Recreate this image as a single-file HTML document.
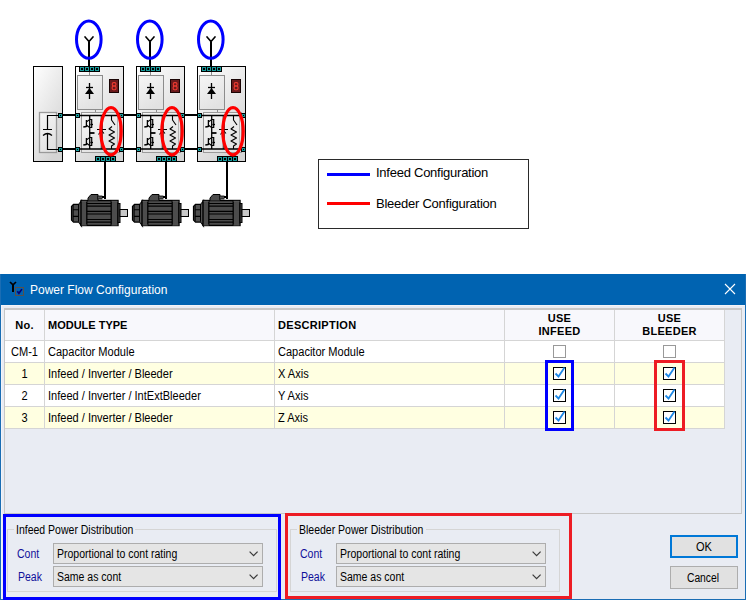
<!DOCTYPE html>
<html><head><meta charset="utf-8">
<style>
*{box-sizing:border-box}
html,body{margin:0;padding:0}
body{width:746px;height:600px;position:relative;overflow:hidden;background:#fff;font-family:"Liberation Sans",sans-serif;color:#000}
.a{position:absolute;white-space:nowrap}
#dlg{position:absolute;left:0;top:274px;width:746px;height:326px;background:#e9ecf3;border:1px solid #1a6db4;border-top:0;box-shadow:inset 0 31px 0 #1b6fb6}
#title{position:absolute;left:1px;top:274px;width:744px;height:31px;background:#0063b1}

.c12{font-size:12px;line-height:14px;transform-origin:0 0}
.cell{font-size:12px;line-height:14px;transform:scaleX(.92);transform-origin:0 0}
.cellc{font-size:12px;line-height:14px;transform:scaleX(.92);transform-origin:50% 0;text-align:center}
.ui{font-size:12px;line-height:14px;transform:scaleX(.875);transform-origin:0 0}
.hd{font-size:11px;line-height:13px;font-weight:bold;letter-spacing:.3px}
.lbl{color:#10109a}
.combo{position:absolute;width:210px;height:21px;background:#e5e5e5;border:1px solid #adadad}
.combo .ui{position:absolute;left:3px;top:3px}
.chev{position:absolute;left:195px;top:7px}
.cb{position:absolute;width:13px;height:13px;border:1px solid #000;background:#fff}
.cb.off{border-color:#999}
.btn{position:absolute;width:68px;height:23px;background:#e1e1e1;border:1px solid #adadad}
</style></head><body>

<svg class="a" style="left:0;top:0" width="746" height="274" viewBox="0 0 746 274">
<defs>
<linearGradient id="mg" x1="0" y1="0" x2="0.6" y2="1">
<stop offset="0" stop-color="#ffffff"/><stop offset="1" stop-color="#d4d4d4"/>
</linearGradient>
<linearGradient id="ig" x1="0" y1="0" x2="0.5" y2="1">
<stop offset="0" stop-color="#f6f6f6"/><stop offset="1" stop-color="#e2e2e2"/>
</linearGradient>
<g id="conn"><rect x="0" y="0" width="5" height="5" fill="#000"/><rect x="1" y="1" width="3" height="3" fill="#179a9a"/><rect x="2" y="2" width="1" height="1" fill="#000"/></g>
<g id="strip"><rect x="0" y="0" width="21" height="6" fill="#000"/>
<g fill="#179a9a"><rect x="1" y="1" width="4" height="4"/><rect x="6" y="1" width="4" height="4"/><rect x="11" y="1" width="4" height="4"/><rect x="16" y="1" width="4" height="4"/></g>
<g fill="#000"><rect x="2" y="2" width="2" height="2"/><rect x="7" y="2" width="2" height="2"/><rect x="12" y="2" width="2" height="2"/><rect x="17" y="2" width="2" height="2"/></g>
</g>
<g id="igbt" stroke="#000" fill="none">
<path d="M5.3 12l3.1-0.5" stroke-width="1.7"/>
<path d="M8.4 5v7" stroke-width="1.3"/>
<path d="M8.6 6.8l3-2.2M8.6 10.2l3 2.3" stroke-width="1.1"/>
<path d="M11.7 4.5h2v8h-2" stroke-width="1.2"/>
<path d="M12.4 9.5h2.6" stroke-width="1.3"/>
</g>
<g id="mod">
<rect x="0.5" y="66.5" width="48" height="95" fill="url(#mg)" stroke="#000" stroke-width="1"/>
<rect x="2.5" y="75.5" width="25" height="34" fill="url(#ig)" stroke="#8c8c8c" stroke-width="1"/>
<path d="M14.5 72v3.5M20.5 110v2.5" stroke="#8c8c8c" stroke-width="1"/>
<path d="M14.5 83v16" stroke="#000" stroke-width="1.3"/>
<path d="M11 87.5h7" stroke="#000" stroke-width="1.3"/>
<polygon points="10,94 19,94 14.5,88" fill="#000"/>
<rect x="34.5" y="79.5" width="9" height="13" fill="#6a1a1c" stroke="#1a0404" stroke-width="1"/>
<rect x="37.3" y="82.6" width="3.6" height="3.4" rx="1.2" fill="none" stroke="#ee3a30" stroke-width="1.1"/><rect x="37.2" y="86" width="3.8" height="3.7" rx="1.2" fill="none" stroke="#ee3a30" stroke-width="1.1"/>
<rect x="6.5" y="112.5" width="38" height="40" fill="url(#ig)" stroke="#9a9a9a" stroke-width="1"/>
<path d="M25.5 116v33M42.5 116v33" stroke="#b4b4b4" stroke-width="1"/>
<use href="#strip" x="4" y="66"/>
<use href="#strip" x="20" y="156"/>
<path d="M0 115.5h48M0 149h48" stroke="#000" stroke-width="1.4"/>
<path d="M14.7 115v34M27 115v34" stroke="#000" stroke-width="1.3"/>
<use href="#igbt" x="3" y="115"/>
<use href="#igbt" x="3" y="133"/>
<path d="M14.7 133h4.8" stroke="#000" stroke-width="1.8"/>
<path d="M22 129.5h9M23.5 134.5l3-4M26.5 130.5l2.5 3" stroke="#000" stroke-width="1.1" fill="none"/>
<path d="M36.5 115v5l3.5 5M37 126.5l-3 2.5 5.5 3-5.5 3 5.5 3-5.5 3 5.5 3-3 2v3" stroke="#000" stroke-width="1.1" fill="none" stroke-linejoin="round"/>
<use href="#conn" x="0" y="113"/><use href="#conn" x="44" y="113"/>
<use href="#conn" x="0" y="147"/><use href="#conn" x="44" y="147"/>
<path d="M14 41.5v25" stroke="#000" stroke-width="2"/>
<path d="M10 36.3v0.7l4 4.6 4-4.6v-0.7" fill="none" stroke="#000" stroke-width="1.6"/>
<path d="M30 161v38" stroke="#000" stroke-width="2"/>
<path d="M26.5 197h4.5" stroke="#000" stroke-width="2"/>
<ellipse cx="13.8" cy="39.6" rx="12.3" ry="18.7" fill="none" stroke="#0000ff" stroke-width="3"/>
<ellipse cx="36" cy="131.2" rx="10.2" ry="23.6" fill="none" stroke="#ff0000" stroke-width="3.2"/>
</g>
<g id="motor">
<path d="M1 206.3l2-2h5.3l2.7-3.6v25.2l-2.7-3.8H3l-2-2z" fill="#505050" stroke="#000" stroke-width="1.2"/>
<path d="M2.5 209.7h5.5M2.5 216.4h5.5M2.6 205v16.5M8.1 204.5v17" stroke="#000" stroke-width="1.1"/><path d="M9.5 203v20" stroke="#5c5c5c" stroke-width="1"/>
<rect x="10.5" y="200.5" width="37" height="25" fill="#4c4c4c" stroke="#000" stroke-width="1.4"/>
<path d="M16.3 200v26M40.7 200v26" stroke="#000" stroke-width="1.3"/>
<path d="M11.2 201.3h5M11.2 225h5M41 201.3h6M41 225h6" stroke="#5e5e5e" stroke-width="1"/>
<path d="M16.5 203.5h24M16.5 206.1h24M16.5 211.3h24M16.5 214h24M16.5 219.5h24M16.5 222.2h24" stroke="#000" stroke-width="1.2"/>
<rect x="47.5" y="203.5" width="2" height="19" fill="#4a4a4a" stroke="#000" stroke-width="1"/>
<rect x="49.5" y="209.5" width="7.5" height="7" fill="#c8c8c8" stroke="#000" stroke-width="1"/>
<path d="M17.5 200.5v-2.5l3-3.5h7v6" fill="#4c4c4c" stroke="#000" stroke-width="1"/>
<rect x="27.5" y="196" width="4" height="3" fill="#8a8a8a" stroke="#000" stroke-width="0.8"/>
<path d="M29.5 196v3" stroke="#000" stroke-width="0.8"/>
</g>
</defs>
<!-- capacitor module -->
<rect x="33.5" y="66.5" width="29" height="95" fill="url(#mg)" stroke="#000" stroke-width="1"/>
<rect x="39.5" y="112.5" width="17" height="40" fill="url(#ig)" stroke="#999" stroke-width="1.3"/>
<path d="M60 115.5H47.5V129.5M43 129.5h9M43 135.5q4.5-4 9 0M47.5 133v16.5H60" fill="none" stroke="#000" stroke-width="1.2"/>
<path d="M62 115h13M62 149h13M123 115h13M123 149h13M184 115h13M184 149h13" stroke="#000" stroke-width="2"/>
<use href="#conn" x="58" y="113"/><use href="#conn" x="58" y="147"/>
<use href="#mod" x="75"/><use href="#mod" x="136"/><use href="#mod" x="197"/>
<use href="#motor" x="70.5"/><use href="#motor" x="131.5"/><use href="#motor" x="192.5"/>
<!-- legend -->
<rect x="318.5" y="159.5" width="210" height="69" fill="#fff" stroke="#2a2a2a" stroke-width="1"/>
<rect x="327" y="173" width="43" height="3" fill="#0000ff"/>
<rect x="327" y="202" width="43" height="3" fill="#ff0000"/>
</svg>
<div class="a" style="left:376px;top:165px;font-size:13px;line-height:15px;letter-spacing:-.25px">Infeed Configuration</div>
<div class="a" style="left:376px;top:196px;font-size:13px;line-height:15px;letter-spacing:-.25px">Bleeder Configuration</div>

<!-- dialog -->
<div id="dlg"></div>
<div id="title"></div>
<svg class="a" style="left:8px;top:280px" width="18" height="18">
<path d="M2 2l3 2.8 3-2.8" fill="none" stroke="#000" stroke-width="1.7"/><path d="M5 4.5v7.5" fill="none" stroke="#000" stroke-width="2"/>
<rect x="7.5" y="7.5" width="8" height="8" fill="none" stroke="#5a5048" stroke-width="1"/>
<path d="M9.3 11.3l1.6 2 3-4.2" fill="none" stroke="#00007a" stroke-width="1.6"/>
</svg>
<div class="a" style="left:30px;top:283px;font-size:12px;line-height:14px;color:#fff">Power Flow Configuration</div>
<svg class="a" style="left:724px;top:283px" width="12" height="12"><path d="M1 1l10 10M11 1L1 11" stroke="#fff" stroke-width="1.1"/></svg>
<div class="a" style="left:1px;top:305px;width:744px;height:1px;background:#f3f4f9"></div>
<div class="a" style="left:1px;top:305px;width:1px;height:294px;background:#f3f4f9"></div>

<!-- grid -->
<div class="a" style="left:4px;top:308px;width:738px;height:206px;border:1px solid #c6c6c6;border-top:2px solid #c8c8c8;background:#e9ecf3"></div>
<div class="a" style="left:5px;top:310px;width:720px;height:31px;background:#f8f8fc;border-bottom:1px solid #d5d5d5"></div>
<div class="a" style="left:5px;top:341px;width:720px;height:22px;background:#fff;border-bottom:1px solid #d5d5d5"></div>
<div class="a" style="left:5px;top:363px;width:720px;height:22px;background:#ffffe1;border-bottom:1px solid #d5d5d5"></div>
<div class="a" style="left:5px;top:385px;width:720px;height:22px;background:#fff;border-bottom:1px solid #d5d5d5"></div>
<div class="a" style="left:5px;top:407px;width:720px;height:22px;background:#ffffe1;border-bottom:1px solid #d5d5d5"></div>
<div class="a" style="left:44px;top:310px;width:1px;height:119px;background:#d5d5d5"></div>
<div class="a" style="left:274px;top:310px;width:1px;height:119px;background:#d5d5d5"></div>
<div class="a" style="left:504px;top:310px;width:1px;height:119px;background:#d5d5d5"></div>
<div class="a" style="left:614px;top:310px;width:1px;height:119px;background:#d5d5d5"></div>
<div class="a" style="left:724px;top:310px;width:1px;height:119px;background:#d5d5d5"></div>

<div class="a hd" style="left:5px;top:319px;width:39px;text-align:center">No.</div>
<div class="a hd" style="left:48px;top:319px;letter-spacing:0">MODULE TYPE</div>
<div class="a hd" style="left:278px;top:319px">DESCRIPTION</div>
<div class="a hd" style="left:505px;top:312px;width:109px;text-align:center;white-space:normal">USE<br>INFEED</div>
<div class="a hd" style="left:615px;top:312px;width:109px;text-align:center;white-space:normal">USE<br>BLEEDER</div>
<div class="a cellc" style="left:5px;top:345px;width:39px">CM-1</div>
<div class="a cell" style="left:48px;top:345px">Capacitor Module</div>
<div class="a cell" style="left:278px;top:345px">Capacitor Module</div>
<div class="a cellc" style="left:5px;top:367px;width:39px">1</div>
<div class="a cell" style="left:48px;top:367px">Infeed / Inverter / Bleeder</div>
<div class="a cell" style="left:278px;top:367px">X Axis</div>
<div class="a cellc" style="left:5px;top:389px;width:39px">2</div>
<div class="a cell" style="left:48px;top:389px">Infeed / Inverter / IntExtBleeder</div>
<div class="a cell" style="left:278px;top:389px">Y Axis</div>
<div class="a cellc" style="left:5px;top:411px;width:39px">3</div>
<div class="a cell" style="left:48px;top:411px">Infeed / Inverter / Bleeder</div>
<div class="a cell" style="left:278px;top:411px">Z Axis</div>
<div class="cb off" style="left:553px;top:345px"></div>
<div class="cb off" style="left:663px;top:345px"></div>
<div class="cb" style="left:553px;top:367px"></div><svg class="a" style="left:553px;top:366px" width="14" height="14"><path d="M2.5 7.5l3 3L11.5 1.5" fill="none" stroke="#1e88e5" stroke-width="1.8"/></svg>
<div class="cb" style="left:663px;top:367px"></div><svg class="a" style="left:663px;top:366px" width="14" height="14"><path d="M2.5 7.5l3 3L11.5 1.5" fill="none" stroke="#1e88e5" stroke-width="1.8"/></svg>
<div class="cb" style="left:553px;top:389px"></div><svg class="a" style="left:553px;top:388px" width="14" height="14"><path d="M2.5 7.5l3 3L11.5 1.5" fill="none" stroke="#1e88e5" stroke-width="1.8"/></svg>
<div class="cb" style="left:663px;top:389px"></div><svg class="a" style="left:663px;top:388px" width="14" height="14"><path d="M2.5 7.5l3 3L11.5 1.5" fill="none" stroke="#1e88e5" stroke-width="1.8"/></svg>
<div class="cb" style="left:553px;top:411px"></div><svg class="a" style="left:553px;top:410px" width="14" height="14"><path d="M2.5 7.5l3 3L11.5 1.5" fill="none" stroke="#1e88e5" stroke-width="1.8"/></svg>
<div class="cb" style="left:663px;top:411px"></div><svg class="a" style="left:663px;top:410px" width="14" height="14"><path d="M2.5 7.5l3 3L11.5 1.5" fill="none" stroke="#1e88e5" stroke-width="1.8"/></svg>
<div class="a" style="left:545px;top:360px;width:29px;height:71px;border:3px solid #0000ff"></div>
<div class="a" style="left:654px;top:360px;width:31px;height:71px;border:3px solid #ed1c24"></div>

<!-- group boxes -->
<div class="a" style="left:7px;top:529px;width:270px;height:63px;border:1px solid #d5d5d5"></div>
<div class="a" style="left:290px;top:529px;width:270px;height:63px;border:1px solid #d5d5d5"></div>
<div class="a" style="left:14px;top:523px;width:121px;height:12px;background:#e9ecf3"></div>
<div class="a" style="left:297px;top:523px;width:129px;height:12px;background:#e9ecf3"></div>
<div class="a ui" style="left:16px;top:523px">Infeed Power Distribution</div>
<div class="a ui" style="left:299px;top:523px">Bleeder Power Distribution</div>
<div class="a ui lbl" style="left:17px;top:547px">Cont</div>
<div class="a ui lbl" style="left:18px;top:570px">Peak</div>
<div class="a ui lbl" style="left:300px;top:547px">Cont</div>
<div class="a ui lbl" style="left:301px;top:570px">Peak</div>
<div class="combo" style="left:53px;top:543px"><div class="ui">Proportional to cont rating</div><svg class="chev" width="10" height="6"><path d="M0.6 0.6l4 4 4-4" fill="none" stroke="#3a3a3a" stroke-width="1.2"/></svg></div>
<div class="combo" style="left:53px;top:566px"><div class="ui" style="top:3px">Same as cont</div><svg class="chev" width="10" height="6"><path d="M0.6 0.6l4 4 4-4" fill="none" stroke="#3a3a3a" stroke-width="1.2"/></svg></div>
<div class="combo" style="left:336px;top:543px"><div class="ui">Proportional to cont rating</div><svg class="chev" width="10" height="6"><path d="M0.6 0.6l4 4 4-4" fill="none" stroke="#3a3a3a" stroke-width="1.2"/></svg></div>
<div class="combo" style="left:336px;top:566px"><div class="ui" style="top:3px">Same as cont</div><svg class="chev" width="10" height="6"><path d="M0.6 0.6l4 4 4-4" fill="none" stroke="#3a3a3a" stroke-width="1.2"/></svg></div>
<div class="btn" style="left:670px;top:535px;border:2px solid #0078d7"></div>
<div class="a" style="left:670px;top:540px;width:68px;text-align:center;font-size:12px;line-height:14px;transform:scaleX(.92);transform-origin:50% 0">OK</div>
<div class="btn" style="left:670px;top:566px"></div>
<div class="a" style="left:669px;top:571px;width:68px;text-align:center;font-size:12px;line-height:14px;transform:scaleX(.86);transform-origin:50% 0">Cancel</div>
<div class="a" style="left:3px;top:514px;width:278px;height:86px;border:3px solid #0000ff"></div>
<div class="a" style="left:285px;top:513px;width:287px;height:86px;border:3px solid #ed1c24"></div>
</body></html>
